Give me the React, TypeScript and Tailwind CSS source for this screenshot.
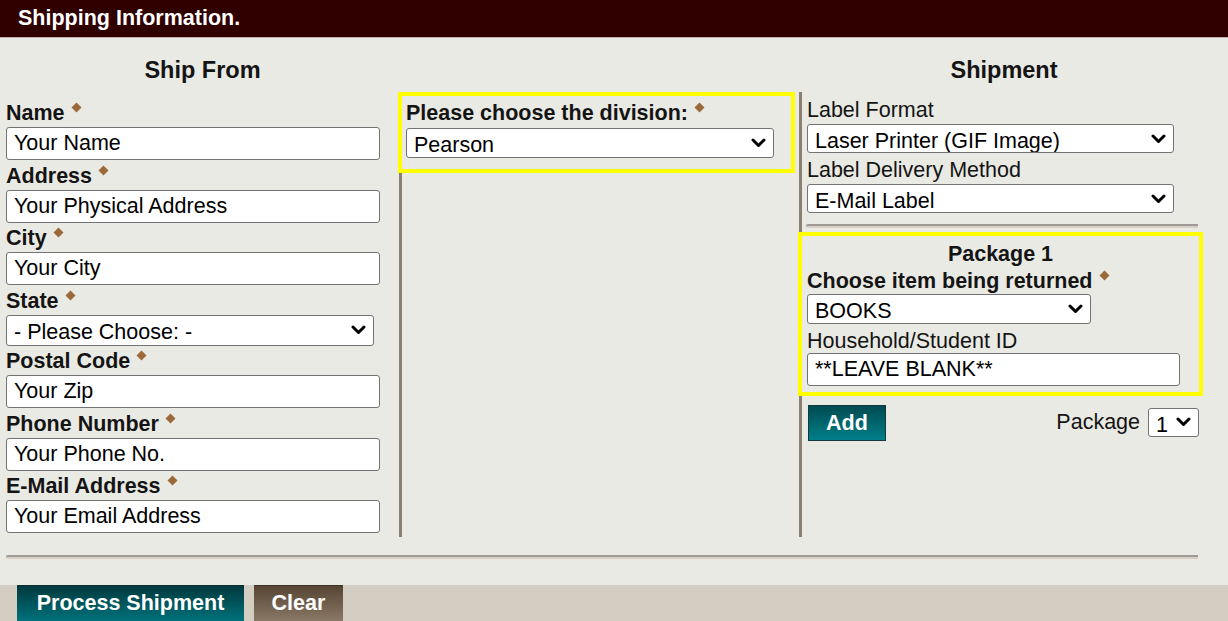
import React from 'react';

const Diamond = () => (
  <svg width="11" height="11" viewBox="0 0 11 11" className="inline-block ml-[6px] align-[7px]">
    <path d="M5.5 0.5 L10.5 5.5 L5.5 10.5 L0.5 5.5 Z" fill="#9c6a3a" />
  </svg>
);

const Chevron = () => (
  <svg
    width="15"
    height="10"
    viewBox="0 0 15 10"
    className="pointer-events-none absolute right-[8px] top-1/2 -translate-y-1/2"
  >
    <path d="M2 2 L7.5 7.5 L13 2" fill="none" stroke="#000" strokeWidth="3" strokeLinecap="round" strokeLinejoin="round" />
  </svg>
);

function TextBox({ value, className }: { value: string; className: string }) {
  return (
    <input
      readOnly
      value={value}
      className={`block bg-white border border-[#737373] rounded-[3px] pl-[7px] text-black outline-none ${className}`}
    />
  );
}

function Select({ value, className }: { value: string; className: string }) {
  return (
    <div className={`relative ${className}`}>
      <select
        value={value}
        onChange={() => {}}
        className="block w-full h-full appearance-none bg-white border border-[#737373] rounded-[3px] pl-[7px] text-black outline-none"
      >
        <option>{value}</option>
      </select>
      <Chevron />
    </div>
  );
}

function Label({ text, required = true }: { text: string; required?: boolean }) {
  return (
    <div className="h-[27px] leading-[27px] font-bold text-[#141414] whitespace-nowrap">
      {text}
      {required && <Diamond />}
    </div>
  );
}

const fromFields = [
  { label: 'Name', value: 'Your Name' },
  { label: 'Address', value: 'Your Physical Address' },
  { label: 'City', value: 'Your City' },
  { label: 'State', value: '- Please Choose: -', select: true },
  { label: 'Postal Code', value: 'Your Zip' },
  { label: 'Phone Number', value: 'Your Phone No.' },
  { label: 'E-Mail Address', value: 'Your Email Address' },
];

const Rule = ({ className }: { className: string }) => (
  <div
    className={`h-[4px] border-t-[2px] border-t-[#9e9b96] border-b-[2px] border-b-[#d8d0c4] border-l border-l-[#9e9b96] rounded-l-[2px] ${className}`}
  />
);

export default function App() {
  return (
    <div className="w-[1228px] h-[621px] overflow-hidden bg-[#eaeae4] font-['Liberation_Sans',Arial,sans-serif] text-[21.5px] text-[#141414]">
      <div className="h-[38px] bg-[#300000] border-b border-[#bfb2ad] pl-[18px] flex items-center text-white font-bold">
        Shipping Information.
      </div>

      <div className="flex h-[54px] pt-[18px] leading-[28px] text-[23.5px] font-bold">
        <div className="w-[399px] pl-[6px] text-center">Ship From</div>
        <div className="w-[400px]" />
        <div className="w-[410px] text-center">Shipment</div>
      </div>

      <div className="flex">
        {/* Ship From */}
        <div className="w-[399px] pl-[6px] pt-[8px] pb-[4px] flex flex-col gap-[2.5px]">
          {fromFields.map((f) => (
            <div key={f.label}>
              <Label text={f.label} />
              {f.select ? (
                <Select value={f.value} className="w-[368px] h-[31px]" />
              ) : (
                <TextBox value={f.value} className="w-[374px] h-[33px]" />
              )}
            </div>
          ))}
        </div>

        {/* Division */}
        <div className="w-[400px] border-l-[3px] border-[#8b7f72]">
          <div className="-ml-[4px] w-[397px] border-[4px] border-[#ffff00] pl-[4px] pt-[4px] pb-[11px]">
            <Label text="Please choose the division:" />
            <Select value="Pearson" className="mt-[1px] w-[368px] h-[30px]" />
          </div>
        </div>

        {/* Shipment */}
        <div className="w-[410px] border-l-[3px] border-[#8b7f72] pl-[5px] pt-[5px]">
          <div className="h-[26px] leading-[26px]">Label Format</div>
          <Select value="Laser Printer (GIF Image)" className="mt-[1px] w-[367px] h-[29px]" />
          <div className="mt-[4px] h-[26px] leading-[26px]">Label Delivery Method</div>
          <Select value="E-Mail Label" className="mt-[1px] w-[367px] h-[29px]" />
          <Rule className="mt-[11px] -ml-[1px] w-[392px]" />

          <div className="mt-[4px] -ml-[9px] w-[405px] border-[4px] border-[#ffff00] pl-[5px] pt-[5px] pb-[6px]">
            <div className="h-[26px] leading-[26px] font-bold text-center pr-[5px]">Package 1</div>
            <div className="mt-[1px] h-[26px] leading-[26px] font-bold whitespace-nowrap">
              Choose item being returned
              <Diamond />
            </div>
            <Select value="BOOKS" className="w-[284px] h-[30px]" />
            <div className="mt-[5px] h-[24px] leading-[24px]">Household/Student ID</div>
            <TextBox value="**LEAVE BLANK**" className="w-[373px] h-[33px]" />
          </div>

          <div className="mt-[9px] w-[392px] flex items-start justify-between">
            <button className="ml-[1px] w-[78px] h-[36px] border border-[#14393c] bg-linear-to-b from-[#004b51] to-[#00808a] text-white font-bold">
              Add
            </button>
            <div className="flex items-center mt-[1px] gap-[8px]">
              <span>Package</span>
              <Select value="1" className="w-[51px] h-[29px]" />
            </div>
          </div>
        </div>
      </div>

      <Rule className="mt-[18px] ml-[6px] w-[1192px]" />

      <div className="mt-[26px] h-[38px] bg-[#d4cdc1] flex gap-[10px] pl-[17px]">
        <button className="w-[227px] h-[38px] border-t border-[#0c2f31] bg-linear-to-b from-[#003a3e] to-[#00757f] text-white font-bold pb-[2px]">
          Process Shipment
        </button>
        <button className="w-[89px] h-[38px] border-t border-[#3e3226] bg-linear-to-b from-[#574534] to-[#8d7c69] text-white font-bold pb-[2px]">
          Clear
        </button>
      </div>
    </div>
  );
}
